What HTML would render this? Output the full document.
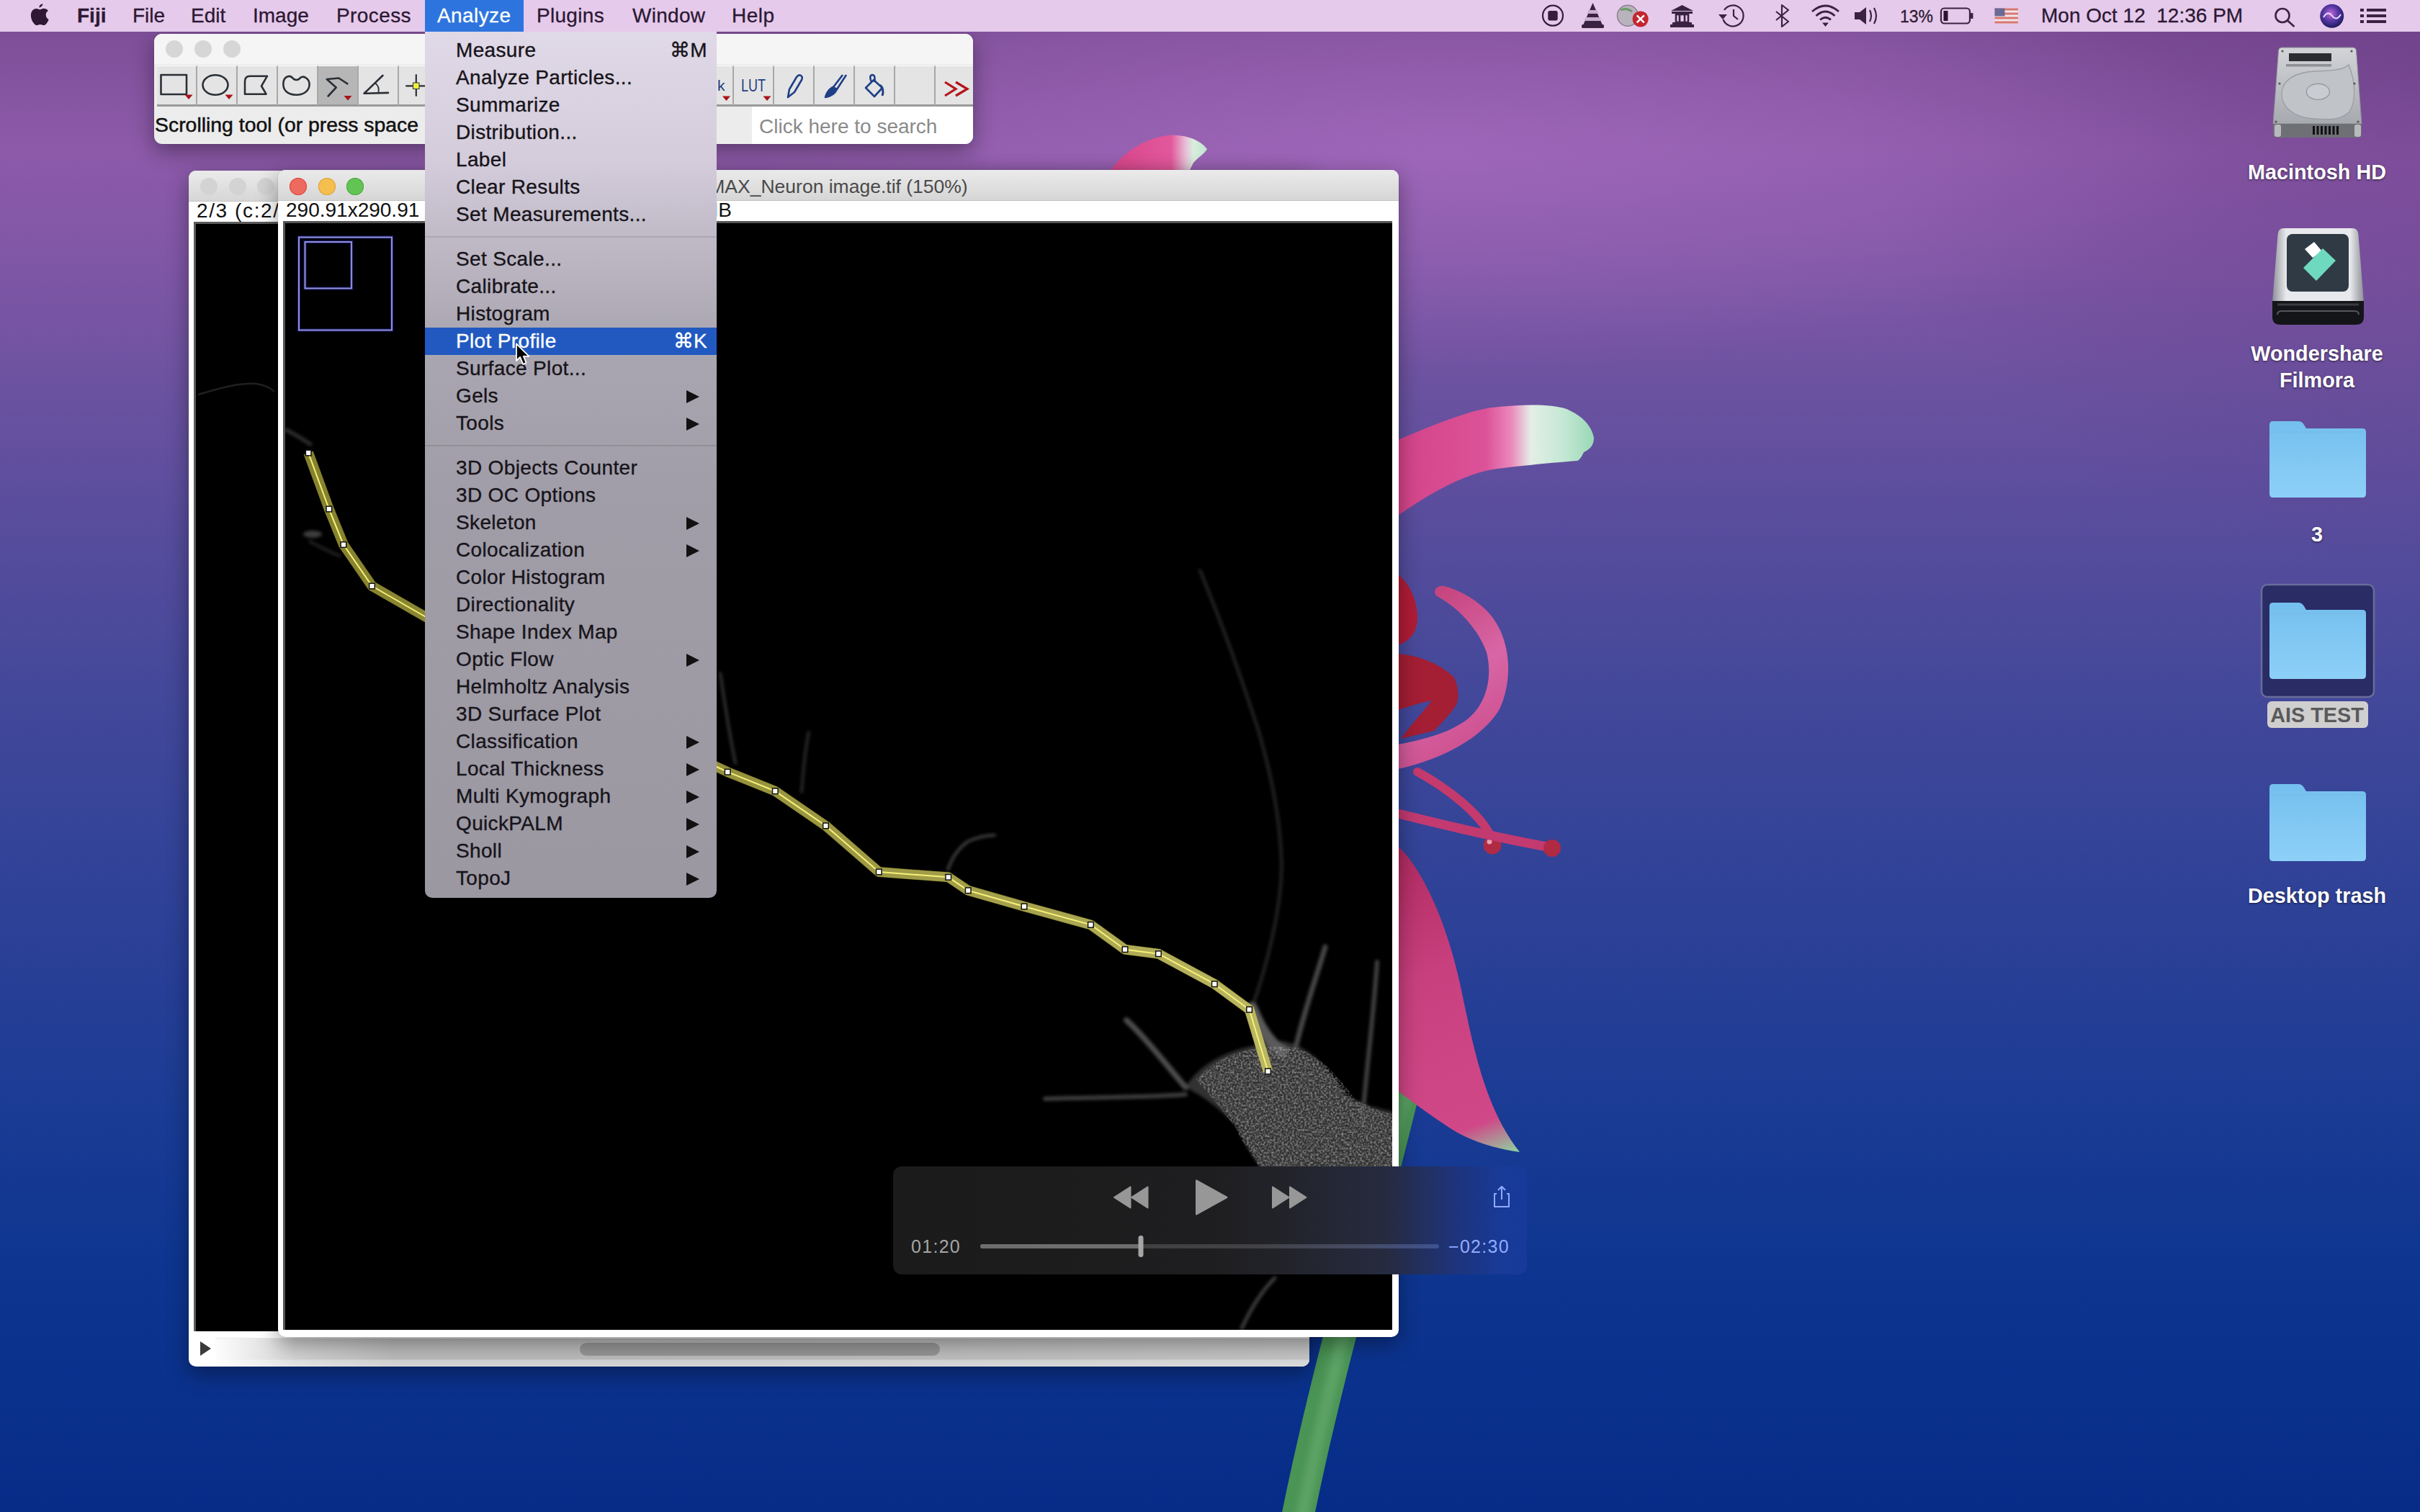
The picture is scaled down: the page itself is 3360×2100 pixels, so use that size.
<!DOCTYPE html>
<html><head><meta charset="utf-8">
<style>
*{margin:0;padding:0;box-sizing:border-box}
html,body{width:3360px;height:2100px;overflow:hidden}
body{position:relative;font-family:"Liberation Sans",sans-serif;
background:radial-gradient(ellipse 1150px 300px at 2000px 210px,rgba(172,112,196,0.55),rgba(172,112,196,0) 100%),radial-gradient(ellipse 800px 700px at 3360px 100px,rgba(80,40,110,0.3),rgba(80,40,110,0) 100%),linear-gradient(180deg,#7a4b94 0px,#7f4f99 50px,#8d5aa9 210px,#7e56a6 380px,#6a52a0 550px,#564c9c 750px,#44489a 950px,#354498 1150px,#283f96 1350px,#1a3b94 1550px,#0e3690 1750px,#062c88 2100px);}
.abs{position:absolute}
#menubar{position:absolute;left:0;top:0;width:3360px;height:44px;background:#e6caeb;color:#2c1934;font-size:28px}
#menubar span{position:absolute;top:7px;line-height:30px;white-space:nowrap;-webkit-text-stroke:0.3px currentColor}
#menu{position:absolute;left:590px;top:44px;width:405px;height:1203px;border-radius:0 0 10px 10px;
background:linear-gradient(180deg,#e0d9e7 0px,#d4ccdb 180px,#c0bac7 285px,#aba7b2 420px,#a09da8 650px,#9d9aa4 1000px,#9b98a2 1203px);
color:#17141a;font-size:28px;overflow:hidden}
#menu .it{position:absolute;left:0;width:405px;height:38px;line-height:38px;padding-left:43px;white-space:nowrap;letter-spacing:0.35px;-webkit-text-stroke:0.35px currentColor}
#menu .sep{position:absolute;left:0;width:405px;height:2px;background:rgba(0,0,0,0.10)}
#menu .sc{position:absolute;right:13px;top:0}
#menu .ar{position:absolute;left:363px;top:11px;width:0;height:0;border-left:18px solid #111;border-top:9px solid transparent;border-bottom:9px solid transparent}
#menu .hl{background:#2159c1;color:#fff}

.win{position:absolute;border-radius:11px;overflow:hidden;box-shadow:0 0 1px rgba(0,0,0,0.4),0 10px 30px rgba(0,0,0,0.38)}
#tb{left:214px;top:47px;width:1137px;height:153px;background:#ececec}
#tb .title{position:absolute;left:0;top:0;width:100%;height:42px;background:#f5f5f5}
.dot{position:absolute;width:24px;height:24px;border-radius:50%;background:#d6d6d6}
.btn{position:absolute;top:44px;width:56px;height:57px;background:#e4e4e4;border-right:2px solid #a8a8a8;border-bottom:3px solid #9a9a9a;border-top:1px solid #fafafa}
.btn svg{position:absolute;left:0;top:0}
#tbstatus{position:absolute;left:1px;top:110px;font-size:28.4px;color:#111;white-space:nowrap;-webkit-text-stroke:0.5px #111}
#search{position:absolute;left:830px;top:101px;width:307px;height:52px;background:#fff}
#search span{position:absolute;left:10px;top:12px;font-size:28px;color:#8a8a8a;white-space:nowrap}

#wback{left:262px;top:237px;width:1556px;height:1661px;background:#fff;border-radius:10px}
#wfront{left:386px;top:236px;width:1556px;height:1621px;background:#fff;border-radius:10px}
.tbar{position:absolute;left:0;top:0;width:100%;height:43px;background:linear-gradient(180deg,#ebebeb,#d6d6d6);border-bottom:1px solid #c4c4c4}
.info{position:absolute;top:41px;font-size:28px;color:#111;white-space:nowrap;line-height:30px}
.tl{position:absolute;width:24px;height:24px;border-radius:50%;top:10px}
#wtitle{position:absolute;left:0;top:7.5px;width:100%;text-align:center;font-size:26.5px;color:#4a4a4a;white-space:nowrap}
#imgb{position:absolute;left:7px;top:71px;width:200px;height:1541px;background:#000;border-left:3px solid #5c5c5c;border-top:3px solid #5c5c5c}
#imgf{position:absolute;left:7px;top:71px;width:1540px;height:1540px;background:#000;border-left:3px solid #555;border-top:3px solid #555;overflow:hidden}
#sbar{position:absolute;left:37px;top:1621px;width:1519px;height:40px;background:linear-gradient(180deg,rgba(255,255,255,0) 0px,rgba(255,255,255,0) 29px,rgba(255,255,255,0.35) 30px),linear-gradient(90deg,#fdfdfd 0px,#d4d4d4 110px,#bcbcbc 250px,#bdbdbd 800px,#c6c6c6 100%);border-top:1px solid #e8e8e8}
#thumb{position:absolute;left:543px;top:1628px;width:500px;height:18px;border-radius:9px;background:#979797}
#vc{position:absolute;left:1240px;top:1620px;width:880px;height:150px;border-radius:12px;background:linear-gradient(90deg,#1b1b1b 0%,#1e1e20 50%,#222329 61%,#262b40 78%,#1f3378 88%,#183a98 96%,#173a9a 100%)}

.dlab{position:absolute;left:3067px;width:300px;text-align:center;color:#fff;font-weight:bold;font-size:28.8px;line-height:36px;text-shadow:0 1px 3px rgba(0,0,0,0.6)}
</style></head>
<body>





<svg class="abs" style="left:0;top:0" width="3360" height="2100" viewBox="0 0 3360 2100">
<defs>
<linearGradient id="pet1" x1="1941" y1="0" x2="2212" y2="0" gradientUnits="userSpaceOnUse">
<stop offset="0" stop-color="#d4448a"/><stop offset="0.45" stop-color="#dc5298"/><stop offset="0.58" stop-color="#ea88bc"/><stop offset="0.68" stop-color="#e4eee6"/><stop offset="0.85" stop-color="#c4e8d4"/><stop offset="1" stop-color="#9ad8b6"/></linearGradient>
<linearGradient id="pet0" x1="1546" y1="0" x2="1675" y2="0" gradientUnits="userSpaceOnUse">
<stop offset="0" stop-color="#d8468a"/><stop offset="0.62" stop-color="#e2589c"/><stop offset="0.78" stop-color="#e8c0d8"/><stop offset="0.86" stop-color="#d8eedd"/><stop offset="1" stop-color="#c0e6d0"/></linearGradient>
<linearGradient id="curl" x1="1943" y1="810" x2="2100" y2="1070" gradientUnits="userSpaceOnUse">
<stop offset="0" stop-color="#c03a70"/><stop offset="0.5" stop-color="#d866a6"/><stop offset="1" stop-color="#c84484"/></linearGradient>
<linearGradient id="pet2" x1="1943" y1="1175" x2="2105" y2="1600" gradientUnits="userSpaceOnUse">
<stop offset="0" stop-color="#b02a60"/><stop offset="0.4" stop-color="#c8407e"/><stop offset="0.88" stop-color="#d04888"/><stop offset="1" stop-color="#90d0a0"/></linearGradient>
<filter id="bl4" x="-50%" y="-10%" width="200%" height="120%"><feGaussianBlur stdDeviation="4"/></filter><linearGradient id="stem" x1="0" y1="0" x2="1" y2="0"><stop offset="0" stop-color="#3f8a48"/><stop offset="0.5" stop-color="#6cb070"/><stop offset="1" stop-color="#3d8444"/></linearGradient>
</defs>
<path d="M1540,240 C1556,214 1588,192 1622,188 C1648,186 1668,196 1676,207 C1672,214 1664,218 1657,226 L1650,240 Z" fill="url(#pet0)"/>
<path d="M1941,611 C1990,590 2040,570 2072,566 C2110,562 2150,560 2175,568 C2198,578 2210,592 2213,608 C2213,618 2208,624 2199,628 C2196,634 2194,638 2190,640 C2150,643 2100,648 2072,652 C2040,658 2000,675 1941,716 Z" fill="url(#pet1)"/>
<path d="M1941,798 C1957,810 1968,834 1968,860 C1967,878 1958,890 1941,896 Z" fill="#b01c36"/>
<path d="M1941,908 C1966,910 1998,920 2019,941 C2026,955 2026,975 2020,982 C2010,996 1998,1008 1991,1015 L1945,1026 C1960,1005 1975,990 1988,973 C1970,976 1955,982 1941,986 Z" fill="#a41e34"/>
<path d="M1941,1068 C1990,1058 2055,1030 2082,985 C2102,942 2098,882 2064,848 C2046,830 2022,818 2005,814 C1994,812 1988,822 1995,828 C2022,842 2052,872 2064,906 C2074,946 2060,982 2036,1000 C2008,1020 1972,1028 1941,1034 Z" fill="url(#curl)"/>
<path d="M1968,1072 C2010,1095 2055,1130 2070,1162" fill="none" stroke="#c43a6c" stroke-width="12" stroke-linecap="round"/>
<circle cx="2072" cy="1174" r="12.5" fill="#b02a44"/>
<circle cx="2068" cy="1169" r="3.5" fill="#e8a0b0"/>
<path d="M1941,1130 C1990,1142 2060,1160 2148,1176" fill="none" stroke="#c23a70" stroke-width="13" stroke-linecap="round"/>
<circle cx="2155" cy="1178" r="12" fill="#b02a44"/>
<path d="M1952,1500 C1910,1680 1845,1890 1800,2115" fill="none" stroke="#4a9455" stroke-width="45"/><path d="M1956,1500 C1914,1680 1850,1890 1806,2115" fill="none" stroke="#64a86c" stroke-width="18" opacity="0.7" filter="url(#bl4)"/><path d="M1941,1175 C1978,1210 2012,1290 2030,1380 C2046,1455 2062,1540 2110,1600 C2080,1596 2040,1585 2012,1566 C1985,1548 1960,1530 1941,1515 Z" fill="url(#pet2)"/>

</svg>

<svg class="abs" style="left:3050px;top:40px" width="310" height="1240" viewBox="3050 40 310 1240">
<defs>
<linearGradient id="hdtop" x1="0" y1="0" x2="0" y2="1"><stop offset="0" stop-color="#d2d4d8"/><stop offset="1" stop-color="#a6a9ae"/></linearGradient>
<linearGradient id="fold" x1="0" y1="0" x2="0" y2="1"><stop offset="0" stop-color="#74bfee"/><stop offset="1" stop-color="#8dd0f8"/></linearGradient>
<linearGradient id="foldtab" x1="0" y1="0" x2="0" y2="1"><stop offset="0" stop-color="#8ccdf2"/><stop offset="1" stop-color="#70b8e6"/></linearGradient>
<linearGradient id="silver" x1="0" y1="0" x2="1" y2="0"><stop offset="0" stop-color="#8d9096"/><stop offset="0.15" stop-color="#e8e9ec"/><stop offset="0.85" stop-color="#e8e9ec"/><stop offset="1" stop-color="#8d9096"/></linearGradient>
</defs>
<!-- Macintosh HD -->
<path d="M3168,66 L3267,66 Q3271,66 3271.5,70 L3279,172 L3156,172 L3163.5,70 Q3164,66 3168,66 Z" fill="url(#hdtop)" stroke="#8a8c92" stroke-width="1"/>
<path d="M3156,172 L3279,172 L3279,186 Q3279,191 3274,191 L3161,191 Q3156,191 3156,186 Z" fill="#6e7076"/>
<rect x="3158" y="173" width="9" height="17" rx="3" fill="#b8babe"/>
<rect x="3269" y="173" width="9" height="17" rx="3" fill="#b8babe"/>
<rect x="3178" y="74" width="59" height="11" fill="#2c2d30"/>
<rect x="3174" y="89" width="63" height="3.5" fill="#8e9096"/>
<path d="M3215,99 C3238,98.5 3254,97 3261,90 C3270,112 3272,140 3262,155 C3250,168 3230,166 3212,165 C3186,163 3168,150 3168,130 C3168,112 3186,100 3215,99 Z" fill="#c0c3c8" stroke="#9a9da3" stroke-width="1.3"/>
<ellipse cx="3218.4" cy="127.4" rx="16" ry="11" fill="#c9ccd0" stroke="#8f9298" stroke-width="1.2"/>
<g fill="#555"><circle cx="3169" cy="71" r="1.6"/><circle cx="3265" cy="71" r="1.6"/><circle cx="3165" cy="116" r="1.6"/><circle cx="3269" cy="116" r="1.6"/><circle cx="3160" cy="169" r="1.6"/><circle cx="3274" cy="169" r="1.6"/></g>
<g fill="#111"><rect x="3211" y="175" width="3" height="12"/><rect x="3216.5" y="175" width="3" height="12"/><rect x="3222" y="175" width="3" height="12"/><rect x="3227.5" y="175" width="3" height="12"/><rect x="3233" y="175" width="3" height="12"/><rect x="3238.5" y="175" width="3" height="12"/><rect x="3244" y="175" width="3" height="12"/></g>
<!-- Filmora -->
<path d="M3171,317 L3266,317 Q3274,317 3274.5,326 L3282,420 L3155,420 L3162.5,326 Q3163,317 3171,317 Z" fill="url(#silver)"/>
<rect x="3175" y="325" width="86" height="80" rx="8" fill="#2f3a44"/>
<path d="M3155,418 L3282,418 L3282,440 Q3282,451 3271,451 L3166,451 Q3155,451 3155,440 Z" fill="#141518"/>
<path d="M3162,423 L3275,423" stroke="#3a3b40" stroke-width="3"/><path d="M3162,437 Q3162,432 3168,432 L3269,432 Q3275,432 3275,437" fill="none" stroke="#55575c" stroke-width="2"/>
<polygon points="3200,346 3213,336 3224,349 3211,358" fill="#ffffff"/>
<polygon points="3198,372 3225,345 3243,362 3216,390" fill="#6fd9c0"/>
<!-- folder 3 -->
<path d="M3151,590 Q3151,585 3156,585 L3191,585 Q3196,585 3199,590 L3202,595 L3280,595 Q3285,595 3285,600 L3285,686 Q3285,691 3280,691 L3156,691 Q3151,691 3151,686 Z" fill="url(#fold)"/>
<path d="M3151,600 L3285,600" stroke="#78bde8" stroke-width="2"/>
<!-- selection -->
<rect x="3140" y="812" width="156" height="156" rx="8" fill="#2a2c66" stroke="#686c9a" stroke-width="2.5"/>
<path d="M3151,842 Q3151,837 3156,837 L3191,837 Q3196,837 3199,842 L3202,847 L3280,847 Q3285,847 3285,852 L3285,938 Q3285,943 3280,943 L3156,943 Q3151,943 3151,938 Z" fill="url(#fold)"/>
<path d="M3151,852 L3285,852" stroke="#78bde8" stroke-width="2"/>
<rect x="3148" y="974" width="140" height="37" rx="6" fill="#cfcfcf"/>
<!-- desktop trash -->
<path d="M3151,1094 Q3151,1089 3156,1089 L3191,1089 Q3196,1089 3199,1094 L3202,1099 L3280,1099 Q3285,1099 3285,1104 L3285,1191 Q3285,1196 3280,1196 L3156,1196 Q3151,1196 3151,1191 Z" fill="url(#fold)"/>
<path d="M3151,1104 L3285,1104" stroke="#78bde8" stroke-width="2"/>
</svg>
<div class="dlab" style="top:221px">Macintosh HD</div>
<div class="dlab" style="top:473px">Wondershare</div>
<div class="dlab" style="top:510px">Filmora</div>
<div class="dlab" style="top:724px">3</div>
<div class="dlab" style="top:975px;color:#5a5a5a;text-shadow:none">AIS TEST</div>
<div class="dlab" style="top:1226px">Desktop trash</div>

<div id="wback" class="win">
  <div class="tbar"></div>
  <div class="tl" style="left:16px;background:#d3d3d3"></div>
  <div class="tl" style="left:56px;background:#d3d3d3"></div>
  <div class="tl" style="left:95px;background:#d3d3d3"></div>
  <div class="info" style="left:11px;letter-spacing:1.6px">2/3 (c:2/3 z:1/1)</div>
  <div id="imgb"><svg class="abs" style="left:0;top:0" width="200" height="1541" viewBox="272 310 200 1541"><path d="M275,547 C300,540 330,530 356,532 C368,534 376,538 381,543" fill="none" stroke="#202020" stroke-width="2.5"/></svg></div>
  <div id="sbar"></div>
  <div id="thumb"></div>
  <div class="abs" style="left:16px;top:1626px;width:0;height:0;border-left:15px solid #3a3a3a;border-top:10px solid transparent;border-bottom:10px solid transparent"></div>
</div>
<div id="wfront" class="win">
  <div class="tbar"></div>
  <div class="tl" style="left:16px;top:11px;background:#ed6a5e;box-shadow:inset 0 0 0 1px #e0443e"></div>
  <div class="tl" style="left:56px;top:11px;background:#f5bf4f;box-shadow:inset 0 0 0 1px #dea236"></div>
  <div class="tl" style="left:95px;top:11px;background:#61c454;box-shadow:inset 0 0 0 1px #4aa83c"></div>
  <div id="wtitle">MAX_Neuron image.tif (150%)</div>
  <div class="info" style="left:11px">290.91x290.91 &micro;m (400x400); 8-bit;</div><div class="info" style="left:549px">3.6MB</div>
  <div id="imgf"><svg class="abs" style="left:0;top:0" width="1540" height="1540" viewBox="396 310 1540 1540">
<defs><filter id="bl2" x="-20%" y="-20%" width="140%" height="140%"><feGaussianBlur stdDeviation="2.2"/></filter>
<filter id="bl6" x="-20%" y="-20%" width="140%" height="140%"><feGaussianBlur stdDeviation="7"/></filter></defs>
<filter id="noise" x="0" y="0" width="100%" height="100%"><feTurbulence type="fractalNoise" baseFrequency="0.35" numOctaves="2" seed="3"/><feColorMatrix values="0 0 0 0 0.6  0 0 0 0 0.6  0 0 0 0 0.6  0 0 0 1.3 -0.5"/><feGaussianBlur stdDeviation="0.7"/><feComposite in2="SourceGraphic" operator="in"/></filter>
<g filter="url(#bl2)" fill="none" stroke-linecap="round" stroke-linejoin="round" opacity="0.85">
<path d="M1646,1510 C1670,1470 1720,1452 1780,1446 C1820,1452 1850,1490 1868,1520 C1890,1535 1915,1540 1936,1544 L1936,1625 L1752,1625 C1735,1600 1722,1580 1719,1567 C1700,1545 1675,1525 1646,1510 Z" fill="#3a3a3a" stroke="none"/>
<path d="M1738,1400 C1760,1340 1782,1250 1779,1191 C1776,1120 1760,1060 1748,1017 C1720,930 1690,850 1666,792" stroke="#262626" stroke-width="5"/>
<path d="M1738,1400 C1750,1430 1765,1450 1780,1460" stroke="#6a6a6a" stroke-width="16"/>
<path d="M1799,1455 C1812,1400 1830,1350 1840,1315" stroke="#555" stroke-width="7"/>
<path d="M1891,1560 C1898,1480 1908,1400 1912,1336" stroke="#4e4e4e" stroke-width="6"/>
<path d="M1646,1510 C1620,1480 1590,1440 1564,1417" stroke="#5a5a5a" stroke-width="8"/>
<path d="M1646,1520 C1600,1524 1520,1524 1451,1526" stroke="#4a4a4a" stroke-width="6"/>
<path d="M1724,1845 C1740,1810 1755,1790 1770,1775" stroke="#4a4a4a" stroke-width="5"/>
<path d="M1000,935 C1008,990 1015,1030 1021,1060" stroke="#3a3a3a" stroke-width="4"/>
<path d="M1113,1100 C1116,1060 1120,1030 1123,1017" stroke="#303030" stroke-width="4"/>
<path d="M1316,1208 C1322,1190 1333,1176 1345,1168 C1360,1162 1372,1160 1381,1160" stroke="#4a4a4a" stroke-width="4"/>
<path d="M397,597 C410,603 420,610 431,617" stroke="#3a3a3a" stroke-width="5"/>
<ellipse cx="434" cy="742" rx="13" ry="5" fill="#4a4a4a" stroke="none"/><path d="M430,752 C445,760 460,768 472,772" stroke="#2a2a2a" stroke-width="4"/>
</g>
<path d="M1660,1500 C1700,1455 1760,1450 1800,1455 C1840,1470 1865,1505 1880,1525 C1900,1538 1920,1545 1936,1548 L1936,1625 L1752,1625 C1735,1600 1722,1580 1715,1565 C1695,1540 1680,1520 1660,1500 Z" fill="#000" filter="url(#noise)"/>
<defs><linearGradient id="dend" x1="428" y1="0" x2="1760" y2="0" gradientUnits="userSpaceOnUse"><stop offset="0" stop-color="#202020"/><stop offset="0.45" stop-color="#404040"/><stop offset="0.75" stop-color="#606060"/><stop offset="1" stop-color="#8a8a8a"/></linearGradient></defs>
<polyline points="428.2,629 456.8,707 476.9,756.5 516.5,814 600,862 800,975 995,1065 1010.2,1072.2 1076.3,1098.8 1146.5,1146.9 1220.3,1211 1316.7,1218.3 1344.2,1236.8 1422,1259 1514.4,1284.4 1562,1318.7 1608.4,1324.7 1686.3,1366.7 1734.6,1402.2 1760.5,1488" fill="none" stroke="url(#dend)" stroke-width="13" stroke-linejoin="round"/>
<polyline points="428.2,629 456.8,707 476.9,756.5 516.5,814 600,862 800,975 995,1065 1010.2,1072.2 1076.3,1098.8 1146.5,1146.9 1220.3,1211 1316.7,1218.3 1344.2,1236.8 1422,1259 1514.4,1284.4 1562,1318.7 1608.4,1324.7 1686.3,1366.7 1734.6,1402.2 1760.5,1488" fill="none" stroke="rgba(235,228,60,0.5)" stroke-width="14" stroke-linejoin="round"/>
<polyline points="428.2,629 456.8,707 476.9,756.5 516.5,814 600,862 800,975 995,1065 1010.2,1072.2 1076.3,1098.8 1146.5,1146.9 1220.3,1211 1316.7,1218.3 1344.2,1236.8 1422,1259 1514.4,1284.4 1562,1318.7 1608.4,1324.7 1686.3,1366.7 1734.6,1402.2 1760.5,1488" fill="none" stroke="#f6f27a" stroke-width="2" stroke-linejoin="round"/>
<rect x="424.4" y="625.2" width="7.6" height="7.6" fill="#fff" stroke="#111" stroke-width="1.5"/>
<rect x="453.0" y="703.2" width="7.6" height="7.6" fill="#fff" stroke="#111" stroke-width="1.5"/>
<rect x="473.1" y="752.7" width="7.6" height="7.6" fill="#fff" stroke="#111" stroke-width="1.5"/>
<rect x="512.7" y="810.2" width="7.6" height="7.6" fill="#fff" stroke="#111" stroke-width="1.5"/>
<rect x="1006.4" y="1068.4" width="7.6" height="7.6" fill="#fff" stroke="#111" stroke-width="1.5"/>
<rect x="1072.5" y="1095.0" width="7.6" height="7.6" fill="#fff" stroke="#111" stroke-width="1.5"/>
<rect x="1142.7" y="1143.1" width="7.6" height="7.6" fill="#fff" stroke="#111" stroke-width="1.5"/>
<rect x="1216.5" y="1207.2" width="7.6" height="7.6" fill="#fff" stroke="#111" stroke-width="1.5"/>
<rect x="1312.9" y="1214.5" width="7.6" height="7.6" fill="#fff" stroke="#111" stroke-width="1.5"/>
<rect x="1340.4" y="1233.0" width="7.6" height="7.6" fill="#fff" stroke="#111" stroke-width="1.5"/>
<rect x="1418.2" y="1255.2" width="7.6" height="7.6" fill="#fff" stroke="#111" stroke-width="1.5"/>
<rect x="1510.6" y="1280.6" width="7.6" height="7.6" fill="#fff" stroke="#111" stroke-width="1.5"/>
<rect x="1558.2" y="1314.9" width="7.6" height="7.6" fill="#fff" stroke="#111" stroke-width="1.5"/>
<rect x="1604.6" y="1320.9" width="7.6" height="7.6" fill="#fff" stroke="#111" stroke-width="1.5"/>
<rect x="1682.5" y="1362.9" width="7.6" height="7.6" fill="#fff" stroke="#111" stroke-width="1.5"/>
<rect x="1730.8" y="1398.4" width="7.6" height="7.6" fill="#fff" stroke="#111" stroke-width="1.5"/>
<rect x="1756.7" y="1484.2" width="7.6" height="7.6" fill="#fff" stroke="#111" stroke-width="1.5"/>
<rect x="415" y="329.5" width="129" height="129" fill="none" stroke="#1a1a70" stroke-width="4"/>
<rect x="415" y="329.5" width="129" height="129" fill="none" stroke="#9a9ad8" stroke-width="1.8"/>
<rect x="423.5" y="336" width="64.5" height="64.5" fill="none" stroke="#1a1a70" stroke-width="4"/>
<rect x="423.5" y="336" width="64.5" height="64.5" fill="none" stroke="#9a9ad8" stroke-width="1.8"/>
</svg></div>
</div>
<div id="vc"><svg class="abs" style="left:0;top:0" width="879" height="150" viewBox="1240 1620 879 150">
<defs><linearGradient id="trk" x1="1361" y1="0" x2="1998" y2="0" gradientUnits="userSpaceOnUse">
<stop offset="0" stop-color="#3d3d3d"/><stop offset="0.62" stop-color="#424246"/><stop offset="0.85" stop-color="#454c68"/><stop offset="1" stop-color="#3e5290"/></linearGradient></defs>
<g fill="#979797" stroke="#979797" stroke-width="2" stroke-linejoin="round">
<polygon points="1547,1663 1569.5,1648.5 1569.5,1677.5"/>
<polygon points="1571,1663 1593.5,1648.5 1593.5,1677.5"/>
<polygon points="1661,1639.5 1703.5,1663 1661,1686.5"/>
<polygon points="1813.5,1663 1791,1648.5 1791,1677.5"/>
<polygon points="1789.5,1663 1767,1648.5 1767,1677.5"/>
</g>
<line x1="1364" y1="1731" x2="1995" y2="1731" stroke="url(#trk)" stroke-width="6" stroke-linecap="round"/>
<line x1="1364" y1="1731" x2="1583" y2="1731" stroke="#6e6e6e" stroke-width="6" stroke-linecap="round"/>
<rect x="1580.5" y="1716" width="7" height="30" rx="3.5" fill="#a6a6a6"/>
<g fill="none" stroke="#90aaff" stroke-width="2" stroke-linejoin="round">
<polyline points="2078,1658 2075,1658 2075,1676 2095,1676 2095,1658 2092,1658"/>
<line x1="2085" y1="1648" x2="2085" y2="1666"/>
<polyline points="2080,1653 2085,1648 2090,1653"/>
</g>
<text x="1265" y="1740" font-family="Liberation Sans" font-size="25" fill="#a5a5a5" letter-spacing="1.3">01:20</text>
<text x="2011" y="1740" font-family="Liberation Sans" font-size="25" fill="#92acff" letter-spacing="1.3">−02:30</text>
</svg></div>

<div id="tb" class="win">
  <div class="title"></div>
  <div class="dot" style="left:16px;top:9px"></div>
  <div class="dot" style="left:56px;top:9px"></div>
  <div class="dot" style="left:96px;top:9px"></div>
  <div class="btn" style="left:4px;background:#e4e4e4"></div>
<div class="btn" style="left:60px;background:#e4e4e4"></div>
<div class="btn" style="left:116px;background:#e4e4e4"></div>
<div class="btn" style="left:172px;background:#e4e4e4"></div>
<div class="btn" style="left:228px;background:#b6b6b6"></div>
<div class="btn" style="left:284px;background:#e4e4e4"></div>
<div class="btn" style="left:340px;background:#e4e4e4"></div>
<div class="btn" style="left:396px;background:#e4e4e4"></div>
<div class="btn" style="left:452px;background:#e4e4e4"></div>
<div class="btn" style="left:508px;background:#e4e4e4"></div>
<div class="btn" style="left:564px;background:#e4e4e4"></div>
<div class="btn" style="left:620px;background:#e4e4e4"></div>
<div class="btn" style="left:693px;background:#e4e4e4"></div>
<div class="btn" style="left:749px;background:#e4e4e4"></div>
<div class="btn" style="left:805px;background:#e4e4e4"></div>
<div class="btn" style="left:861px;background:#e4e4e4"></div>
<div class="btn" style="left:917px;background:#e4e4e4"></div>
<div class="btn" style="left:973px;background:#e4e4e4"></div>
<div class="btn" style="left:1029px;background:#e4e4e4"></div>
<div class="btn" style="left:1085px;background:#e4e4e4"></div>
<svg class="abs" style="left:0;top:0" width="1137" height="153" viewBox="214 47 1137 153">
<g fill="none" stroke="#2b2f36" stroke-width="2.6" stroke-linejoin="round" stroke-linecap="round">
<rect x="223.5" y="104" width="35.5" height="27"/>
<ellipse cx="299" cy="118" rx="17.5" ry="13.8"/>
<path d="M340,113 Q340,105.7 347,105.7 L371,105.7 L363,119.5 L369.5,130.7 L340,130.7 Z"/>
<path d="M393.5,114 C395,106 402,104 406,108 C409,112 414,112 417,108 C422,104 430,110 429.6,117.8 C429,127 421,132 411,131.7 C400,131.5 392,126 393.5,114 Z"/>
<polyline points="482.4,116.3 470.4,108.5 453.7,110 466.7,121.5 455.6,133.5"/>
<polyline points="531.5,104.8 505.6,129.8 538.9,128.9"/>
<path d="M521,115.5 Q527,120 525.5,128" stroke-width="1.8"/>
<line x1="564" y1="119.3" x2="592" y2="119.3" stroke-width="2.2"/>
<line x1="577.8" y1="104" x2="577.8" y2="133" stroke-width="2.2"/>
</g>
<rect x="573.5" y="115" width="8.5" height="8.5" fill="#f0f040" stroke="#333" stroke-width="1"/>
<g fill="#a8141a">
<polygon points="256.5,131.5 267.5,131.5 262,138"/>
<polygon points="312.5,131.5 323.5,131.5 318,138"/>
<polygon points="477.5,133 488.5,133 483,139.5"/>
<polygon points="1003,133.5 1014,133.5 1008.5,140"/>
<polygon points="1059.5,133.5 1070.5,133.5 1065,140"/>
</g>
<text x="996" y="126" font-family="Liberation Sans" font-size="21" fill="#1d3d82">k</text>
<text x="1029" y="126.5" font-family="Liberation Sans" font-size="24" fill="#1d3d82" textLength="34" lengthAdjust="spacingAndGlyphs">LUT</text>
<g fill="none" stroke="#1f3f86" stroke-width="2.6" stroke-linejoin="round">
<path d="M1094,135 L1096,124 L1106,107 Q1109,103 1112,105 Q1115,107 1113,111 L1103,128 Z"/>
<path d="M1146,135 Q1148,126 1156,121 L1162,124 Q1158,133 1146,135 Z" fill="#1f3f86"/>
<line x1="1157" y1="121" x2="1170" y2="104"/>
<line x1="1162" y1="124" x2="1175" y2="104"/>
<path d="M1202,122 L1213,111 L1225,122 L1214,134 Z"/>
<path d="M1210,114 Q1206,105 1211,104 Q1216,104 1214,114"/>
<path d="M1222,118 Q1228,124 1225,133" stroke-width="3"/>
</g>
<g fill="none" stroke="#b3161a" stroke-width="3.2" stroke-linejoin="miter">
<polyline points="1312,114 1327,123.5 1312,133"/>
<polyline points="1327,114 1343,123.5 1327,133"/>
</g>
</svg>
  <div id="tbstatus">Scrolling tool (or press space</div>
  <div id="search"><span>Click here to search</span></div>
</div>

<div id="menubar">
  <span style="left:107px;font-weight:bold">Fiji</span>
  <span style="left:184px">File</span>
  <span style="left:265px">Edit</span>
  <span style="left:351px">Image</span>
  <span style="left:467px;letter-spacing:0.4px">Process</span>
  <div class="abs" style="left:590px;top:0;width:137px;height:44px;background:#2e74de"></div>
  <span style="left:607px;color:#fff;letter-spacing:0.4px">Analyze</span>
  <span style="left:745px;letter-spacing:0.3px">Plugins</span>
  <span style="left:878px;letter-spacing:0.3px">Window</span>
  <span style="left:1016px;letter-spacing:0.5px">Help</span>
  <span style="left:2834px;top:7px">Mon Oct 12&nbsp; 12:36 PM</span>
  <span style="left:2638px;top:8px;font-size:23px">13%</span>
  <svg class="abs" style="left:0;top:0" width="3360" height="44" viewBox="0 0 3360 44">
  <path d="M54.5,10.5 C56.5,10.3 59,8.6 59.6,5.2 C57,5.4 54.2,7.5 54.5,10.5 Z M63.7,20.5 C63.6,16.6 66.9,15 67,14.9 C65.2,12.2 62.4,11.9 61.4,11.9 C59,11.6 56.8,13.3 55.6,13.3 C54.3,13.3 52.5,11.9 50.5,12 C47.9,12 45.5,13.5 44.2,15.8 C41.5,20.5 43.5,27.5 46.1,31.3 C47.4,33.1 48.9,35.2 50.9,35.1 C52.8,35 53.6,33.9 55.9,33.9 C58.2,33.9 58.9,35.1 60.9,35.1 C63,35.1 64.3,33.2 65.5,31.3 C67,29.2 67.6,27.1 67.6,27 C67.5,26.9 63.8,25.5 63.7,20.5 Z" fill="#2e1836"/>
  <g fill="none" stroke="#351d3d" stroke-width="2.2">
   <circle cx="2156" cy="21.7" r="14"/>
  </g>
  <rect x="2149.3" y="15" width="13.4" height="13.4" rx="2.5" fill="#351d3d"/>
  <polygon points="2211.5,4 2198,35 2225,35" fill="#3a2242"/>
  <polygon points="2205.5,14 2217.5,14 2219.5,19 2203.5,19" fill="#c9aed0"/>
  <polygon points="2201.5,24 2221.5,24 2223.5,29 2199.5,29" fill="#c9aed0"/>
  <rect x="2196" y="34" width="31" height="5" rx="1.5" fill="#3a2242"/>
  <circle cx="2260" cy="21.7" r="14.5" fill="#b9b3bd" stroke="#8a8290" stroke-width="1.5"/>
  <path d="M2250,14 Q2258,10 2266,16" stroke="#6b9a6a" stroke-width="3" fill="none"/>
  <circle cx="2277.7" cy="26.4" r="11" fill="#c4262e"/>
  <path d="M2272.7,21.4 L2282.7,31.4 M2282.7,21.4 L2272.7,31.4" stroke="#fff" stroke-width="2.6"/>
  <g fill="#3a2242">
   <polygon points="2335.5,7 2320,15 2351,15"/>
   <rect x="2321" y="16" width="29" height="3"/>
   <rect x="2319" y="34" width="33" height="4"/>
   <rect x="2322" y="31" width="27" height="3"/>
  </g>
  <g fill="none" stroke="#3a2242" stroke-width="2.6"><rect x="2327" y="20" width="17" height="11"/><line x1="2332" y1="20" x2="2332" y2="31"/><line x1="2339" y1="20" x2="2339" y2="31"/></g>
  <g fill="none" stroke="#3a2242" stroke-width="2.2">
   <path d="M2394,14 A14.5,14.5 0 1 1 2392.5,27"/>
   <polyline points="2407,13 2407,22 2413,27"/>
   <path d="M2466,16 L2483,30 L2474,37 L2474,7 L2483,14 L2466,28" stroke-linejoin="round"/>
   <path d="M2516,16 Q2534.5,0 2553,16" stroke-width="2.8"/>
   <path d="M2521.5,22 Q2534.5,10 2547.5,22" stroke-width="2.8"/>
   <path d="M2527,27.5 Q2534.5,21 2542,27.5" stroke-width="2.8"/>
   <path d="M2596,14 Q2600,22 2596,30"/>
   <path d="M2602,11 Q2608,22 2602,33"/>
   <rect x="2695" y="11.5" width="40" height="21" rx="4.5"/>
  </g>
  <polygon points="2386,20 2398,20 2392,27" fill="#3a2242"/>
  <polygon points="2534.5,37 2530,31.5 2539,31.5" fill="#3a2242"/>
  <polygon points="2575,17 2582,17 2591,10 2591,34 2582,27 2575,27" fill="#3a2242"/>
  <rect x="2698.5" y="15" width="6" height="14" fill="#2a1530"/>
  <rect x="2736" y="18" width="3.5" height="8" rx="1" fill="#3a2242"/>
  <g>
   <rect x="2769.5" y="11.5" width="32.5" height="21" fill="#f1e4ea"/>
   <rect x="2769.5" y="11.5" width="32.5" height="3" fill="#d9776f"/>
   <rect x="2769.5" y="17.5" width="32.5" height="3" fill="#d9776f"/>
   <rect x="2769.5" y="23.5" width="32.5" height="3" fill="#d9776f"/>
   <rect x="2769.5" y="29.5" width="32.5" height="3" fill="#d9776f"/>
   <rect x="2769.5" y="11.5" width="14" height="11" fill="#6b6a95"/>
  </g>
  <g fill="none" stroke="#3a2242" stroke-width="2.6"><circle cx="3169" cy="21.5" r="9.5"/><line x1="3176" y1="28.5" x2="3185.5" y2="37"/></g>
  <defs><radialGradient id="siri" cx="0.45" cy="0.4" r="0.6"><stop offset="0" stop-color="#c56ad8"/><stop offset="0.5" stop-color="#5a3aa8"/><stop offset="1" stop-color="#201a60"/></radialGradient></defs>
  <circle cx="3237.7" cy="22.3" r="16.5" fill="url(#siri)"/>
  <path d="M3226,24 Q3232,14 3238,22 Q3244,30 3250,20" stroke="#e8d8ff" stroke-width="2" fill="none"/>
  <g fill="#3a2242"><rect x="3277" y="12" width="5" height="4"/><rect x="3277" y="20" width="5" height="4"/><rect x="3277" y="28" width="5" height="4"/>
  <rect x="3286" y="12" width="27" height="4"/><rect x="3286" y="20" width="27" height="4"/><rect x="3286" y="28" width="27" height="4"/></g>
  </svg>
</div>

<div id="menu">
<div class="it" style="top:7px">Measure<span class="sc">⌘M</span></div>
<div class="it" style="top:45px">Analyze Particles...</div>
<div class="it" style="top:83px">Summarize</div>
<div class="it" style="top:121px">Distribution...</div>
<div class="it" style="top:159px">Label</div>
<div class="it" style="top:197px">Clear Results</div>
<div class="it" style="top:235px">Set Measurements...</div>
<div class="sep" style="top:284px"></div>
<div class="it" style="top:297px">Set Scale...</div>
<div class="it" style="top:335px">Calibrate...</div>
<div class="it" style="top:373px">Histogram</div>
<div class="it hl" style="top:411px">Plot Profile<span class="sc">⌘K</span></div>
<div class="it" style="top:449px">Surface Plot...</div>
<div class="it" style="top:487px">Gels<i class="ar"></i></div>
<div class="it" style="top:525px">Tools<i class="ar"></i></div>
<div class="sep" style="top:574px"></div>
<div class="it" style="top:587px">3D Objects Counter</div>
<div class="it" style="top:625px">3D OC Options</div>
<div class="it" style="top:663px">Skeleton<i class="ar"></i></div>
<div class="it" style="top:701px">Colocalization<i class="ar"></i></div>
<div class="it" style="top:739px">Color Histogram</div>
<div class="it" style="top:777px">Directionality</div>
<div class="it" style="top:815px">Shape Index Map</div>
<div class="it" style="top:853px">Optic Flow<i class="ar"></i></div>
<div class="it" style="top:891px">Helmholtz Analysis</div>
<div class="it" style="top:929px">3D Surface Plot</div>
<div class="it" style="top:967px">Classification<i class="ar"></i></div>
<div class="it" style="top:1005px">Local Thickness<i class="ar"></i></div>
<div class="it" style="top:1043px">Multi Kymograph<i class="ar"></i></div>
<div class="it" style="top:1081px">QuickPALM<i class="ar"></i></div>
<div class="it" style="top:1119px">Sholl<i class="ar"></i></div>
<div class="it" style="top:1157px">TopoJ<i class="ar"></i></div>
</div><!--menuend-->

<svg class="abs" style="left:700px;top:470px" width="50" height="50" viewBox="700 470 50 50">
<path d="M717,477.5 L717,501 L722.2,496 L726.2,505.8 L730.6,504 L726.8,494.8 L734.5,494.8 Z" fill="#000" stroke="#fff" stroke-width="1.8" stroke-linejoin="round"/>
</svg>
</body></html>
